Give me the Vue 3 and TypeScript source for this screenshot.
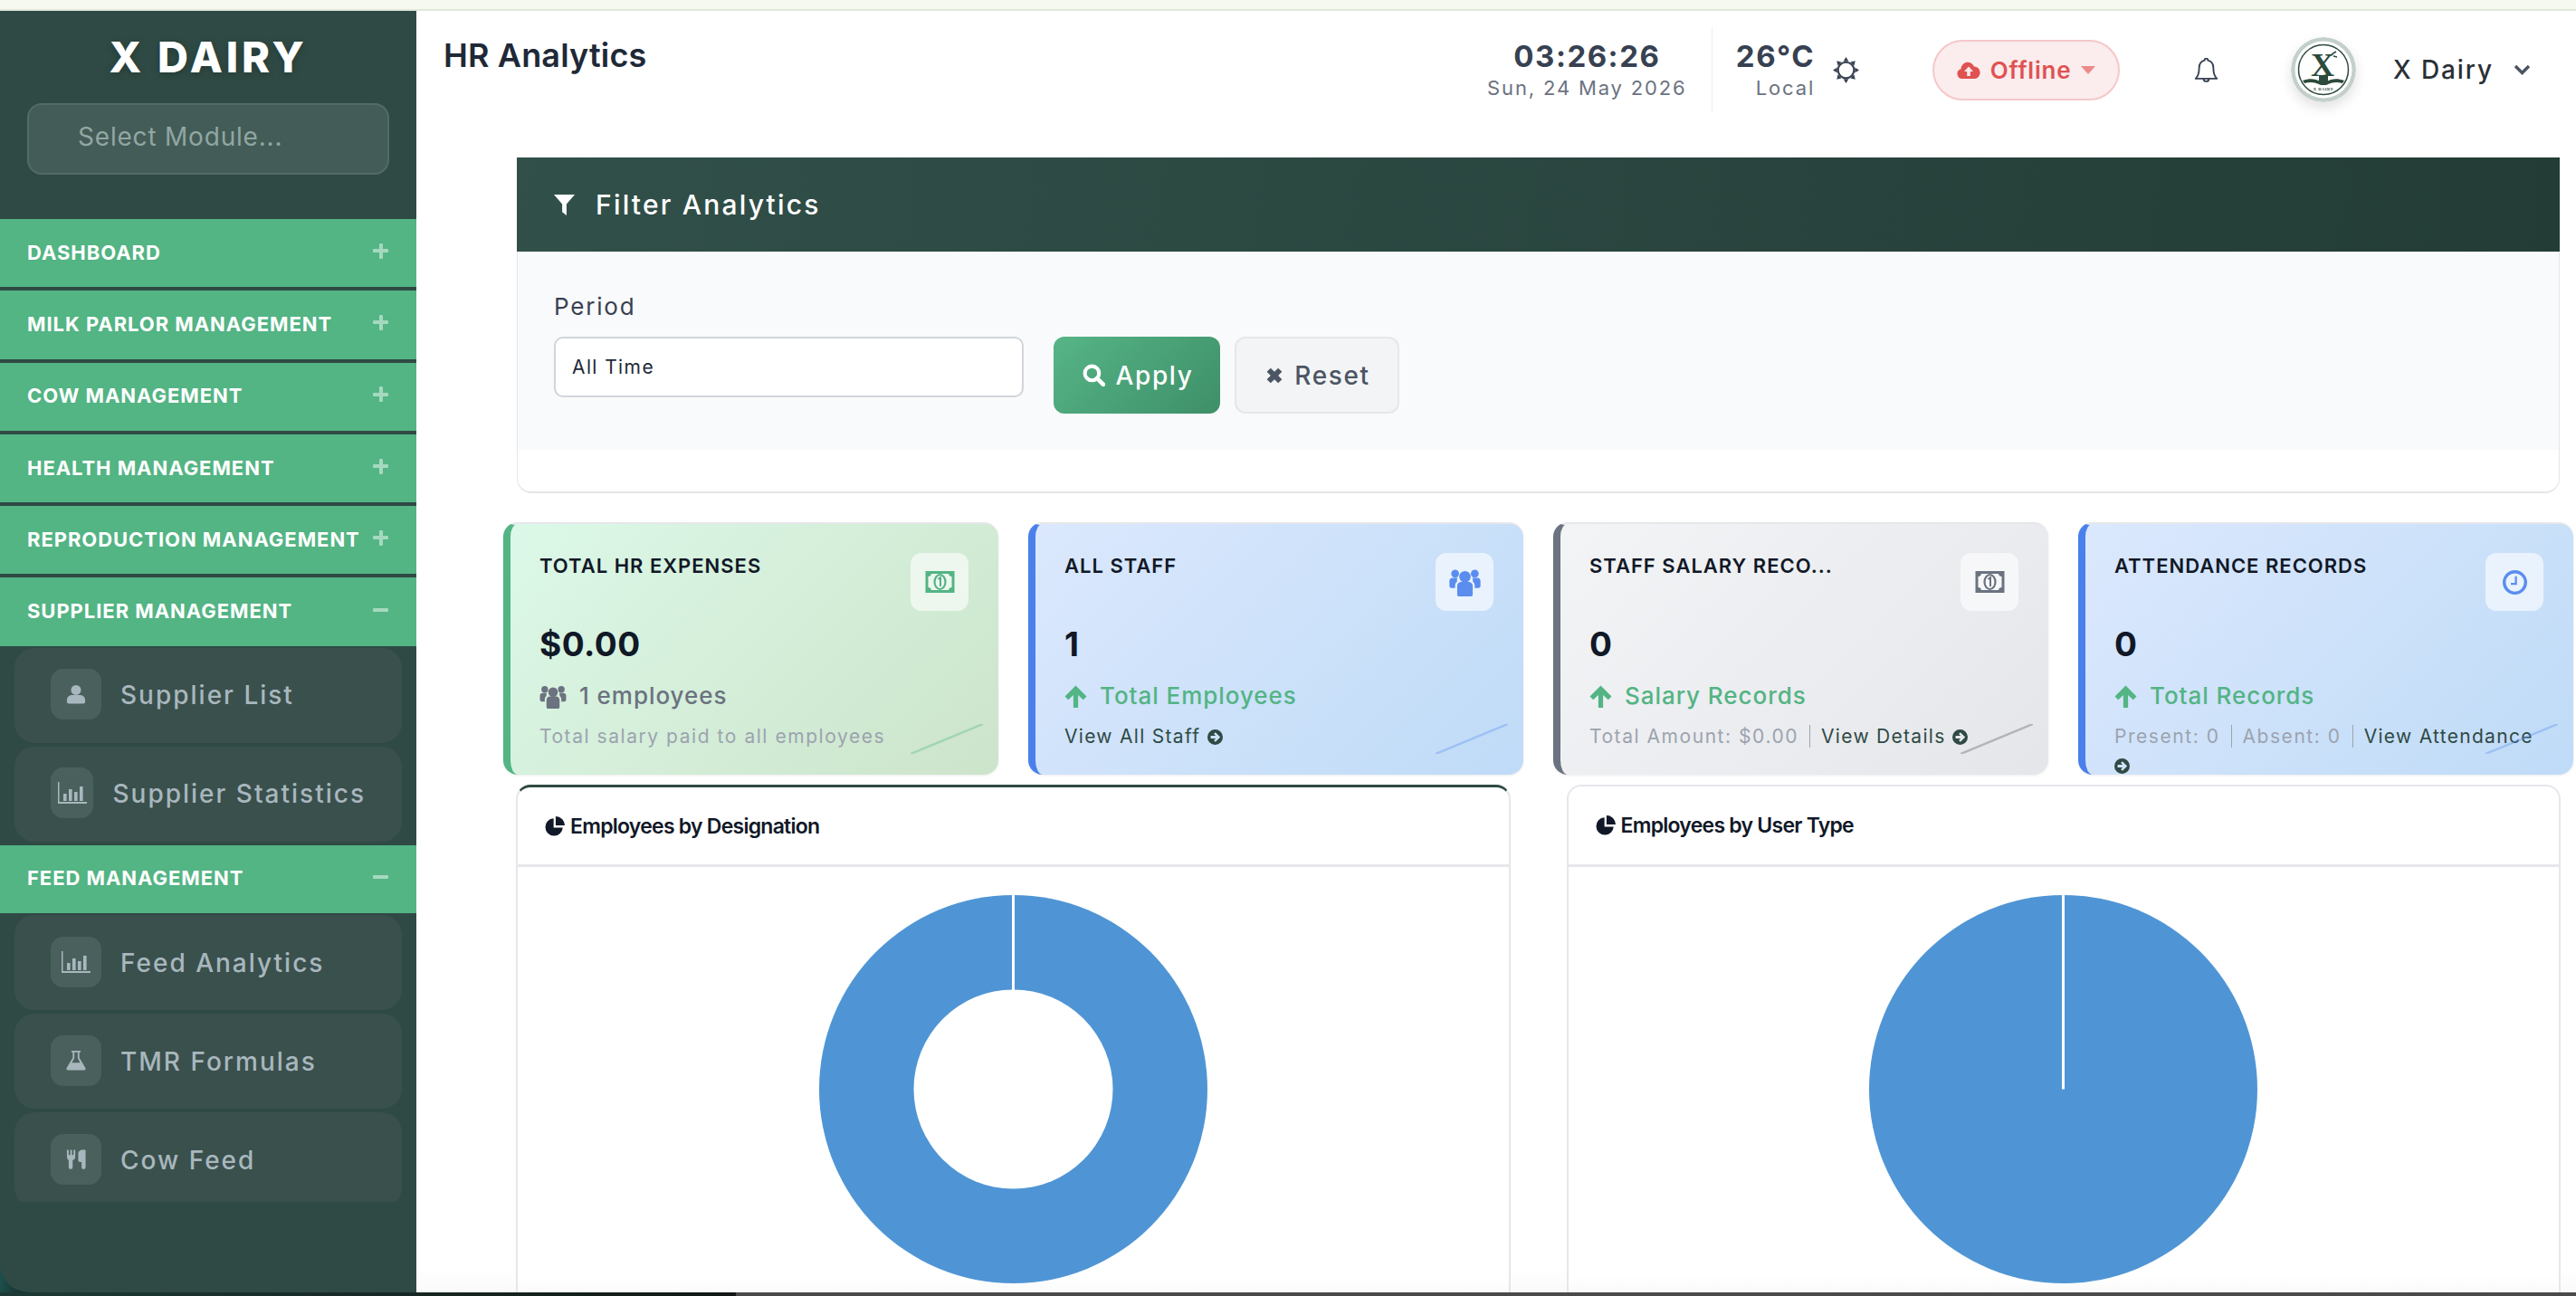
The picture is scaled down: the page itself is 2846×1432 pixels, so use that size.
<template>
  <div class="page">
    <!-- shared icon set -->
    <svg class="icon-defs" aria-hidden="true">
      <symbol id="i-user" viewBox="0 0 24 24"><circle cx="12" cy="7" r="6" /><path d="M1 21v-2c0-3.500 3-6 6-6h10c3 0 6 2.500 6 6v2c0 1.500-1 2.500-2.500 2.500h-17C2 23.500 1 22.500 1 21z" /></symbol>
      <symbol id="i-bars" viewBox="0 0 32 24"><path d="M0 0h1.500v22H32v2H0z" /><rect x="6" y="13" width="3.600" height="8" /><rect x="12" y="8" width="3.600" height="13" /><rect x="18" y="11" width="3.600" height="10" /><rect x="24" y="5" width="3.600" height="16" /></symbol>
      <symbol id="i-flask" viewBox="0 0 24 24"><path fill-rule="evenodd" d="M6.500 0h11v2H16v6.500l7.300 12.300c.7 1.300-.2 2.700-1.600 2.700H2.300C.9 23.500 0 22.100.7 20.800L8 8.500V2H6.500z M10 2v7l-3 5.500h10L14 9V2z" /></symbol>
      <symbol id="i-cutlery" viewBox="0 0 24 24"><path d="M1 1h2v6h1.800V1h2v6h1.800V1h2v8c0 2-1.200 3.500-3 3.900V21a2.300 2.300 0 0 1-4.600 0v-8.100C2.200 12.500 1 11 1 9z" /><path d="M14 5c0-2 2-4 5-4h3.500v20a2.300 2.300 0 0 1-4.600 0v-6H16c-1.200 0-2-.9-2-2z" /></symbol>
      <symbol id="i-filter" viewBox="0 0 24 24"><path d="M0 0h24L14.500 11v13l-5-4v-9z" /></symbol>
      <symbol id="i-search" viewBox="0 0 24 24"><circle cx="10" cy="10" r="7.500" fill="none" stroke="currentColor" stroke-width="4" /><path d="M15.500 15.500 22 22" fill="none" stroke="currentColor" stroke-width="4.500" stroke-linecap="round" /></symbol>
      <symbol id="i-times" viewBox="0 0 24 24"><path d="M2 7 7 2l5 5 5-5 5 5-5 5 5 5-5 5-5-5-5 5-5-5 5-5z" /></symbol>
      <symbol id="i-money" viewBox="0 0 32 24"><path fill-rule="evenodd" d="M0 0h32v24H0z M3 6q3 0 3.500-3h19q.5 3 3.500 3v12q-3 0-3.500 3h-19Q6 18 3 18z" /><ellipse cx="16" cy="12" rx="6" ry="8" fill="none" stroke="currentColor" stroke-width="2.200" /><path d="M14 9l2.500-2v10" fill="none" stroke="currentColor" stroke-width="2" /></symbol>
      <symbol id="i-users" viewBox="0 0 30 28"><circle cx="15" cy="9" r="5.500" /><circle cx="5.500" cy="6" r="3.800" /><circle cx="24.500" cy="6" r="3.800" /><path d="M7.500 18c0-2.500 2-4 4-4h7c2 0 4 1.500 4 4v8.500a1.500 1.500 0 0 1-1.500 1.500H9a1.500 1.500 0 0 1-1.500-1.500z" /><path d="M0 13c0-2 1.500-3 3-3h5c-.5 1-1 2-.5 3.500C6 14.500 5.500 16 5.500 18v2H2c-1 0-2-1-2-2z" /><path d="M30 13c0-2-1.500-3-3-3h-5c.5 1 1 2 .5 3.500 1.500 1 2 2.500 2 4.500v2H28c1 0 2-1 2-2z" /></symbol>
      <symbol id="i-clock" viewBox="0 0 24 24"><circle cx="12" cy="12" r="10.500" fill="none" stroke="currentColor" stroke-width="3" /><path d="M13 6v7.500H8" fill="none" stroke="currentColor" stroke-width="2" /></symbol>
      <symbol id="i-arrow-up" viewBox="0 0 24 24"><path d="M12 .5 23.500 12 20 15.500l-5.500-5V24h-5V10.500l-5.500 5L.5 12z" /></symbol>
      <symbol id="i-arrow-circle" viewBox="0 0 24 24"><path fill-rule="evenodd" d="M12 0a12 12 0 1 0 0 24 12 12 0 0 0 0-24z M12.500 4.500 20 12l-7.500 7.500-2.500-2.500 3-3H5v-4h8l-3-3z" /></symbol>
      <symbol id="i-pie" viewBox="0 0 24 24"><path d="M10.500 2.500v11h11A10.500 10.500 0 1 1 10.500 2.500z" /><path d="M13 0v11h11A11 11 0 0 0 13 0z" /></symbol>
      <symbol id="i-cloud" viewBox="0 0 26 19"><path fill-rule="evenodd" d="M6 19a5.500 5.500 0 0 1-1.500-10.800A7.500 7.500 0 0 1 19 5.500a6.800 6.800 0 0 1 1 13.500z M13 5.500l5 5.500h-3.200v5h-3.600v-5H8z" /></symbol>
      <symbol id="i-sun" viewBox="0 0 28 28">
        <circle cx="14" cy="14" r="8.500" fill="none" stroke="currentColor" stroke-width="2" />
        <path d="M14 0l2.800 4.600h-5.600z" /><path d="M14 0l2.800 4.600h-5.600z" transform="rotate(45 14 14)" />
        <path d="M14 0l2.800 4.600h-5.600z" transform="rotate(90 14 14)" /><path d="M14 0l2.800 4.600h-5.600z" transform="rotate(135 14 14)" />
        <path d="M14 0l2.800 4.600h-5.600z" transform="rotate(180 14 14)" /><path d="M14 0l2.800 4.600h-5.600z" transform="rotate(225 14 14)" />
        <path d="M14 0l2.800 4.600h-5.600z" transform="rotate(270 14 14)" /><path d="M14 0l2.800 4.600h-5.600z" transform="rotate(315 14 14)" />
      </symbol>
      <symbol id="i-bell" viewBox="2 1 22 23"><path d="M13 1.500a1.500 1.500 0 0 1 1.500 1.800c3.500.9 5.200 3.900 5.200 7.200 0 6 1.300 8 3.300 10H3c2-2 3.300-4 3.300-10 0-3.300 1.700-6.300 5.200-7.200A1.500 1.500 0 0 1 13 1.500z M10.500 20.500a2.500 2.500 0 0 0 5 0" fill="none" stroke="currentColor" stroke-width="1.600" stroke-linejoin="round" /></symbol>
    </svg>

    <div class="top-strip"></div>

    <div class="shell">
      <aside class="sidebar">
        <div class="brand">
          <div class="brand-name">X DAIRY</div>
          <div class="module-select">Select Module...</div>
        </div>
        <nav class="menu">
          <template v-for="group in menu" :key="group.label">
            <div class="menu-head">
              <span>{{ group.label }}</span>
              <span class="menu-toggle" :class="{ open: group.items.length }"></span>
            </div>
            <a v-for="item in group.items" :key="item.label" class="menu-item">
              <span class="menu-icon">
                <svg :class="'mi-' + item.icon"><use :href="'#i-' + item.icon" /></svg>
              </span>
              <span class="menu-text">{{ item.label }}</span>
            </a>
          </template>
        </nav>
      </aside>

      <main class="main">
        <header class="topbar">
          <h1 class="page-title">HR Analytics</h1>
          <div class="topbar-right">
            <div class="clock">
              <div class="clock-time">03:26:26</div>
              <div class="clock-date">Sun, 24 May 2026</div>
            </div>
            <div class="weather">
              <div class="weather-temp">26°C</div>
              <div class="weather-place">Local</div>
            </div>
            <svg class="sun"><use href="#i-sun" /></svg>
            <div class="offline">
              <svg class="cloud"><use href="#i-cloud" /></svg>
              <span>Offline</span>
              <span class="caret"></span>
            </div>
            <svg class="bell"><use href="#i-bell" /></svg>
            <svg class="logo" viewBox="0 0 72 72">
              <circle cx="36" cy="36" r="36" fill="#c3cfcb" />
              <circle cx="36" cy="36" r="31.500" fill="#fff" />
              <circle cx="36" cy="36" r="27.500" fill="none" stroke="#2d4a3c" stroke-width="1.500" />
              <text x="35" y="43" text-anchor="middle" class="logo-x">X</text>
              <path d="M44 20c2-2 4-3 6-4M47 21l4 1" fill="none" stroke="#2d4a3c" stroke-width="1.500" />
              <path d="M13 48c8-3 14-2 20 1h6c6-3 12-4 20-1l-2 3c-7-2-12-1-18 2h-6c-6-3-11-4-18-2z" fill="#2d4a3c" />
              <rect x="31" y="42" width="10" height="7" fill="#2d4a3c" />
              <text x="36" y="59" text-anchor="middle" class="logo-small">X DAIRY</text>
            </svg>
            <span class="user-name">X Dairy</span>
            <svg class="chevron" viewBox="0 0 19 12"><path d="M2 2l7.500 7.500L17 2" fill="none" stroke="currentColor" stroke-width="3.400" /></svg>
          </div>
        </header>

        <div class="content">
          <section class="filter-card">
            <div class="filter-head">
              <svg class="filter-icon"><use href="#i-filter" /></svg>
              <span>Filter Analytics</span>
            </div>
            <div class="filter-body">
              <div class="field">
                <label class="field-label">Period</label>
                <div class="field-input">All Time</div>
              </div>
              <button class="btn btn-apply">
                <svg class="btn-icon"><use href="#i-search" /></svg>Apply
              </button>
              <button class="btn btn-reset">
                <svg class="btn-icon small"><use href="#i-times" /></svg>Reset
              </button>
            </div>
          </section>

          <section class="stats">
            <article v-for="card in stats" :key="card.title" class="stat-card" :class="'is-' + card.tone">
              <div class="stat-top">
                <div class="stat-title">{{ card.title }}</div>
                <div class="stat-icon">
                  <svg :class="'si-' + card.icon"><use :href="'#i-' + card.icon" /></svg>
                </div>
              </div>
              <div class="stat-value">{{ card.value }}</div>
              <div class="stat-sub" :class="{ muted: card.subMuted }">
                <svg :class="card.subMuted ? 'sub-users' : 'sub-arrow'"><use :href="card.subMuted ? '#i-users' : '#i-arrow-up'" /></svg>
                <span>{{ card.sub }}</span>
              </div>
              <div class="stat-foot">
                <span v-for="note in card.notes" :key="note" class="foot-note">{{ note }}</span>
                <span v-if="card.link" class="foot-link">{{ card.link }}</span>{{ ' ' }}<svg v-if="card.link" class="foot-arrow"><use href="#i-arrow-circle" /></svg>
              </div>
              <svg class="stat-slash" viewBox="0 0 80 33"><path d="M0 33 80 0" stroke="currentColor" stroke-width="2.500" /></svg>
            </article>
          </section>

          <section class="charts">
            <article class="chart-card first">
              <div class="chart-head"><svg class="pie-icon"><use href="#i-pie" /></svg>Employees by Designation</div>
              <div class="chart-body">
                <svg class="chart" viewBox="0 0 429 429">
                  <circle cx="214.500" cy="214.500" r="214.500" fill="#4f95d5" />
                  <circle cx="214.500" cy="214.500" r="110" fill="#fff" />
                  <rect x="213" y="0" width="3" height="106" fill="#fff" />
                </svg>
              </div>
            </article>
            <article class="chart-card">
              <div class="chart-head"><svg class="pie-icon"><use href="#i-pie" /></svg>Employees by User Type</div>
              <div class="chart-body">
                <svg class="chart" viewBox="0 0 429 429">
                  <circle cx="214.500" cy="214.500" r="214.500" fill="#4f95d5" />
                  <rect x="213" y="0" width="3" height="214.500" fill="#fff" />
                </svg>
              </div>
            </article>
          </section>
        </div>
      </main>
    </div>

    <div class="bottom-strip"></div>
  </div>
</template>

<script setup lang="ts">
interface MenuItem {
  label: string
  icon: string
}

interface MenuGroup {
  label: string
  items: MenuItem[]
}

interface StatCard {
  title: string
  value: string
  icon: string
  tone: 'green' | 'blue' | 'gray'
  sub: string
  subMuted?: boolean
  notes: string[]
  link?: string
}

const menu: MenuGroup[] = [
  { label: 'DASHBOARD', items: [] },
  { label: 'MILK PARLOR MANAGEMENT', items: [] },
  { label: 'COW MANAGEMENT', items: [] },
  { label: 'HEALTH MANAGEMENT', items: [] },
  { label: 'REPRODUCTION MANAGEMENT', items: [] },
  {
    label: 'SUPPLIER MANAGEMENT',
    items: [
      { label: 'Supplier List', icon: 'user' },
      { label: 'Supplier Statistics', icon: 'bars' }
    ]
  },
  {
    label: 'FEED MANAGEMENT',
    items: [
      { label: 'Feed Analytics', icon: 'bars' },
      { label: 'TMR Formulas', icon: 'flask' },
      { label: 'Cow Feed', icon: 'cutlery' }
    ]
  }
]

const stats: StatCard[] = [
  {
    title: 'TOTAL HR EXPENSES',
    value: '$0.00',
    icon: 'money',
    tone: 'green',
    sub: '1 employees',
    subMuted: true,
    notes: ['Total salary paid to all employees']
  },
  {
    title: 'ALL STAFF',
    value: '1',
    icon: 'users',
    tone: 'blue',
    sub: 'Total Employees',
    notes: [],
    link: 'View All Staff'
  },
  {
    title: 'STAFF SALARY RECO...',
    value: '0',
    icon: 'money',
    tone: 'gray',
    sub: 'Salary Records',
    notes: ['Total Amount: $0.00'],
    link: 'View Details'
  },
  {
    title: 'ATTENDANCE RECORDS',
    value: '0',
    icon: 'clock',
    tone: 'blue',
    sub: 'Total Records',
    notes: ['Present: 0', 'Absent: 0'],
    link: 'View Attendance'
  }
]
</script>

<style>
html,
body {
  margin: 0;
  background: #fff;
}
</style>

<style scoped>
.page {
  width: 2846px;
  height: 1432px;
  overflow: hidden;
  display: flex;
  flex-direction: column;
  font-family: Inter, "Noto Sans", sans-serif;
  color: #1f2937;
  background: #fff;
}

.icon-defs {
  position: absolute;
  width: 0;
  height: 0;
}

svg {
  fill: currentColor;
  flex-shrink: 0;
}

.top-strip {
  height: 10px;
  flex-shrink: 0;
  background: #f6f9f0;
  border-bottom: 2px solid #e2e7dc;
}

.shell {
  flex: 1;
  min-height: 0;
  display: flex;
  background: linear-gradient(90deg, #1d4f4c 0, #17302e 24px, #222 80px);
}

.bottom-strip {
  height: 4px;
  flex-shrink: 0;
  background: linear-gradient(90deg, #1d3a37 0, #111814 813px, #4a4a4a 813px);
}

/* sidebar */
.sidebar {
  width: 460px;
  flex-shrink: 0;
  display: flex;
  flex-direction: column;
  background: #2f4a44;
  border-bottom-left-radius: 32px;
}

.brand {
  height: 230px;
  flex-shrink: 0;
  padding: 23px 30px 0;
  box-sizing: border-box;
}

.brand-name {
  text-align: center;
  color: #fff;
  font-size: 47px;
  line-height: 56px;
  font-weight: 800;
  letter-spacing: 3.800px;
  text-shadow: 0 2px 8px rgba(0, 0, 0, 0.25);
}

.module-select {
  margin-top: 23px;
  height: 79px;
  box-sizing: border-box;
  padding: 0 0 6px 54px;
  display: flex;
  align-items: center;
  background: #435c57;
  border: 2px solid #526b66;
  border-radius: 16px;
  color: #92a6a2;
  font-size: 28px;
  letter-spacing: 0.800px;
}

.menu {
  height: 1086px;
  overflow: hidden;
}

.menu-head {
  height: 75.300px;
  margin-bottom: 4px;
  padding: 0 31px 2px 30px;
  box-sizing: border-box;
  display: flex;
  align-items: center;
  justify-content: space-between;
  background: #53b484;
  color: #fff;
  font-size: 22px;
  font-weight: 700;
  letter-spacing: 0.950px;
  white-space: nowrap;
}

.menu-toggle {
  position: relative;
  width: 17px;
  height: 17px;
  margin-top: -3px;
  flex-shrink: 0;
  color: #a5d9bf;
}

.menu-toggle::before,
.menu-toggle::after {
  content: "";
  position: absolute;
  background: currentColor;
  border-radius: 1px;
}

.menu-toggle::before {
  left: 0;
  right: 0;
  top: 6.500px;
  height: 4px;
}

.menu-toggle::after {
  top: 0;
  bottom: 0;
  left: 6.500px;
  width: 4px;
}

.menu-toggle.open::after {
  display: none;
}

.menu-head:has(+ .menu-item) {
  margin-bottom: 2px;
}

.menu-item {
  height: 105px;
  margin: 0 16px 4px;
  padding: 0 40px;
  box-sizing: border-box;
  display: flex;
  align-items: center;
  gap: 21px;
  background: #3a504d;
  border-radius: 22px;
  color: #a8b7bd;
}

.menu-icon {
  width: 56px;
  height: 56px;
  min-width: 0;
  margin-top: -2px;
  flex-shrink: 1;
  display: flex;
  align-items: center;
  justify-content: center;
  background: #4a605d;
  border-radius: 14px;
}

.menu-text {
  font-size: 28px;
  letter-spacing: 2px;
  white-space: nowrap;
  font-weight: 500;
}

.mi-user,
.mi-flask {
  width: 22px;
  height: 24px;
}

.mi-bars {
  width: 32px;
  height: 24px;
}

.mi-cutlery {
  width: 23px;
  height: 28px;
}

/* top bar */
.main {
  position: relative;
  flex: 1;
  min-width: 0;
  overflow: hidden;
  background: linear-gradient(#fff calc(100% - 28px), #fafafa);
}

.topbar {
  height: 161px;
  box-sizing: border-box;
  padding: 18px 50px 0 30px;
  display: flex;
  justify-content: space-between;
  align-items: flex-start;
}

.page-title {
  margin: 0;
  font-size: 36px;
  line-height: 63px;
  font-weight: 600;
  color: #1f2937;
  letter-spacing: 0.150px;
}

.topbar-right {
  height: 94px;
  display: flex;
  align-items: center;
}

.clock {
  width: 221px;
  height: 94px;
  padding-right: 27px;
  box-sizing: content-box;
  border-right: 1px solid #eceff1;
  display: flex;
  flex-direction: column;
  align-items: center;
  justify-content: center;
}

.clock-time,
.weather-temp {
  font-size: 33px;
  line-height: 40px;
  font-weight: 700;
  color: #374151;
  letter-spacing: 1.500px;
}

.clock-date,
.weather-place {
  font-size: 22px;
  line-height: 30px;
  color: #6b7280;
  letter-spacing: 1.850px;
  white-space: nowrap;
}

.weather {
  margin-left: 26px;
  display: flex;
  flex-direction: column;
  align-items: flex-end;
}

.sun {
  width: 29px;
  height: 29px;
  margin-left: 20px;
  margin-top: 1px;
  color: #374151;
}

.offline {
  width: 207px;
  height: 67px;
  margin-left: 81px;
  box-sizing: border-box;
  display: flex;
  align-items: center;
  justify-content: center;
  gap: 11px;
  background: #fbeced;
  border: 2px solid #f5c8c8;
  border-radius: 34px;
  color: #e05252;
  font-size: 26px;
  font-weight: 600;
  letter-spacing: 0.800px;
}

.cloud {
  width: 26px;
  height: 19px;
}

.caret {
  width: 0;
  height: 0;
  border-left: 8px solid transparent;
  border-right: 8px solid transparent;
  border-top: 9px solid #ee8a8a;
}

.bell {
  width: 27px;
  height: 27px;
  margin-left: 82px;
  color: #374151;
}

.logo {
  width: 72px;
  height: 72px;
  margin-left: 80px;
  border-radius: 50%;
  box-shadow: 0 6px 14px rgba(0, 0, 0, 0.12);
}

.logo-x {
  font-family: "Liberation Serif", serif;
  font-size: 36px;
  font-weight: 700;
  fill: #2d4a3c;
}

.logo-small {
  font-family: "Liberation Serif", serif;
  font-size: 4.500px;
  font-weight: 700;
  letter-spacing: 0.500px;
  fill: #2d4a3c;
}

.user-name {
  margin-left: 41px;
  font-size: 28px;
  font-weight: 500;
  color: #2b2f36;
  letter-spacing: 1.900px;
  white-space: nowrap;
}

.chevron {
  width: 19px;
  height: 12px;
  margin-left: 22px;
  color: #4b5563;
}

/* content */
.content {
  padding: 1px 18px 0 111px;
}

.filter-card {
  height: 371px;
  box-sizing: border-box;
  background: #fff;
  border: 1px solid #e4e6e9;
  border-top: 0;
  border-bottom-width: 2px;
  border-radius: 0 0 16px 16px;
}

.filter-head {
  height: 104px;
  margin: 0 -1px;
  padding-left: 41px;
  display: flex;
  align-items: center;
  gap: 23px;
  background: linear-gradient(100deg, #315049, #233c36);
  color: #fff;
  font-size: 30px;
  font-weight: 500;
  letter-spacing: 2.200px;
}

.filter-icon {
  width: 23px;
  height: 25px;
}

.filter-body {
  height: 218px;
  padding: 1px 40px 0;
  display: flex;
  align-items: flex-start;
  background: #f9fafb;
}

.field {
  width: 519px;
  padding-top: 44px;
}

.field-label {
  display: block;
  font-size: 26px;
  line-height: 32px;
  color: #374151;
  letter-spacing: 1.800px;
}

.field-input {
  height: 67px;
  margin-top: 17px;
  padding: 0 18px;
  box-sizing: border-box;
  display: flex;
  align-items: center;
  background: #fff;
  border: 2px solid #d1d5db;
  border-radius: 10px;
  color: #1f2937;
  font-size: 21px;
  letter-spacing: 1.400px;
}

.btn {
  height: 85px;
  margin-top: 93px;
  padding: 0 0 0 2px;
  box-sizing: border-box;
  display: flex;
  align-items: center;
  justify-content: center;
  gap: 12px;
  border: 0;
  border-radius: 12px;
  font-family: inherit;
  font-size: 28px;
  font-weight: 500;
  letter-spacing: 1.600px;
}

.btn-apply {
  width: 184px;
  margin-left: 33px;
  color: #fff;
  background: linear-gradient(135deg, #56b587, #3e8f68);
}

.btn-reset {
  width: 182px;
  margin-left: 16px;
  color: #4b5563;
  background: #f3f4f6;
  border: 2px solid #e5e7eb;
}

.btn-icon {
  width: 25px;
  height: 25px;
}

.btn-icon.small {
  width: 20px;
  height: 22px;
}

.stats {
  margin: 32px -15px 0;
  display: grid;
  grid-template-columns: repeat(4, 547px);
  gap: 33px;
}

.stat-card {
  position: relative;
  height: 279px;
  box-sizing: border-box;
  padding: 34px 33px 0 32px;
  overflow: hidden;
  border-left: 8px solid;
  border-top: 2px solid #e5e7eb;
  border-radius: 16px;
  box-shadow: 0 1px 3px rgba(0, 0, 0, 0.08);
}

.is-green {
  color: #53b484;
  border-left-color: #53b484;
  background: linear-gradient(135deg, #dcf8e8, #cce4ca);
}

.is-blue {
  color: #5b8def;
  border-left-color: #4a80ec;
  background: linear-gradient(135deg, #dbe8fd, #bfdbf7);
}

.is-gray {
  color: #6b7280;
  border-left-color: #6b7280;
  background: linear-gradient(135deg, #f3f4f6, #e4e6ea);
}

.stat-top {
  display: flex;
  justify-content: space-between;
  align-items: flex-start;
}

.stat-title {
  margin-top: -2px;
  font-size: 22px;
  line-height: 28px;
  font-weight: 600;
  color: #111827;
  letter-spacing: 1px;
}

.stat-icon {
  width: 64px;
  height: 64px;
  margin-top: -2px;
  display: flex;
  align-items: center;
  justify-content: center;
  background: rgba(255, 255, 255, 0.6);
  border-radius: 12px;
}

.si-money {
  width: 33px;
  height: 24px;
}

.si-users {
  width: 35px;
  height: 32px;
}

.si-clock {
  width: 27px;
  height: 27px;
}

.stat-value {
  margin-top: 15px;
  font-size: 37px;
  line-height: 44px;
  font-weight: 700;
  color: #111827;
  letter-spacing: 0.500px;
}

.stat-sub {
  margin-top: 19px;
  display: flex;
  align-items: center;
  gap: 14px;
  color: #53b484;
  font-size: 26px;
  line-height: 32px;
  font-weight: 500;
  letter-spacing: 0.950px;
}

.stat-sub.muted {
  color: #6b7280;
}

.sub-arrow {
  width: 25px;
  height: 25px;
}

.sub-users {
  width: 30px;
  height: 27px;
}

.stat-foot {
  margin-top: 13px;
  color: #9ca3af;
  font-size: 21px;
  line-height: 32px;
  letter-spacing: 1.550px;
}

.foot-note {
  padding-right: 12px;
  margin-right: 12px;
  border-right: 1px solid #9ca3af;
}

.foot-note:last-child {
  padding-right: 0;
  margin-right: 0;
  border-right: 0;
}

.foot-link {
  color: #2f4a44;
  letter-spacing: 1.300px;
  white-space: nowrap;
}

.foot-arrow {
  width: 17px;
  height: 17px;
  vertical-align: -2px;
  color: #2f4a44;
}

.stat-slash {
  position: absolute;
  right: 17px;
  bottom: 23px;
  width: 80px;
  height: 33px;
  opacity: 0.35;
  fill: none;
}

.is-gray .stat-slash {
  color: #555;
}

.charts {
  margin: 11px -1px 0;
  display: grid;
  grid-template-columns: 1fr 1fr;
  gap: 62px;
}

.chart-card {
  box-sizing: border-box;
  height: 620px;
  background: linear-gradient(#fff 540px, #fafafa 561px);
  border: 2px solid #e5e7eb;
  border-radius: 16px;
}

.chart-card.first {
  border-top: 3px solid #2f4a44;
}

.chart-head {
  height: 86px;
  padding-left: 30px;
  display: flex;
  align-items: center;
  gap: 6px;
  border-bottom: 3px solid #e5e7eb;
  color: #111827;
  font-size: 23px;
  font-weight: 600;
  letter-spacing: -0.750px;
}

.chart-card.first .chart-head {
  height: 85px;
}

.pie-icon {
  width: 22px;
  height: 22px;
}

.chart-body {
  padding-top: 31px;
  display: flex;
  justify-content: center;
}

.chart {
  width: 429px;
  height: 429px;
}
</style>
